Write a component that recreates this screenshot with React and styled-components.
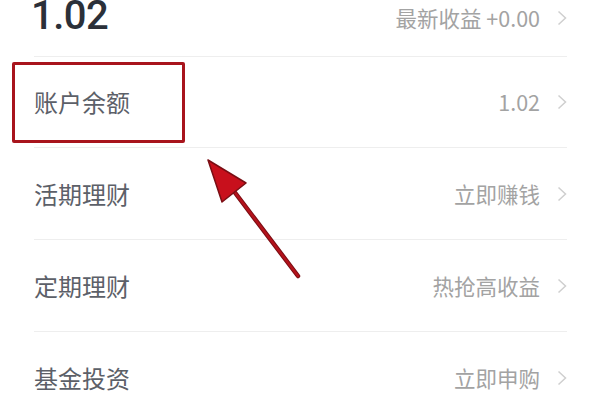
import React from "react";
import styled, { createGlobalStyle } from "styled-components";

const Global = createGlobalStyle`
  html, body { margin: 0; padding: 0; background: #fff; }
  body { font-family: "Noto Sans CJK SC", "Noto Sans", sans-serif; }
`;

const Page = styled.div`
  position: relative;
  width: 600px;
  height: 400px;
  overflow: hidden;
  background: #fff;
`;

const List = styled.div`
  display: flex;
  flex-direction: column;
  padding: 0 33px 0 34px;
`;

const Header = styled.div`
  height: 57px;
  display: flex;
  align-items: flex-start;
  justify-content: space-between;
  border-bottom: 1px solid #eeeeee;
  box-sizing: border-box;
`;

const Amount = styled.div`
  font-family: Roboto, "Liberation Sans", sans-serif;
  font-size: 40px;
  font-weight: 500;
  color: #2b3039;
  line-height: 1;
  margin-top: -4px;
  margin-left: -3px;
  letter-spacing: -0.5px;
`;

const Row = styled.div`
  height: ${(p) => p.h || 92}px;
  display: flex;
  align-items: center;
  justify-content: space-between;
  border-bottom: ${(p) => (p.last ? "none" : "1px solid #eeeeee")};
  box-sizing: border-box;
`;

const Label = styled.div`
  font-size: 24px;
  color: #5c6068;
  line-height: 1;
`;

const Side = styled.div`
  display: flex;
  align-items: center;
  gap: 17px;
  margin-top: ${(p) => p.top || 0}px;
`;

const Value = styled.div`
  font-size: 21.5px;
  color: #a3a3a3;
  line-height: 1;
  font-family: "Noto Sans CJK SC", "Noto Sans", sans-serif;
`;

const Highlight = styled.div`
  position: absolute;
  left: 12px;
  top: 62px;
  width: 173px;
  height: 81px;
  box-sizing: border-box;
  border: 3.5px solid #a8141c;
  border-radius: 2px;
`;

const ArrowSvg = styled.svg`
  position: absolute;
  left: 0;
  top: 0;
  pointer-events: none;
`;

const Chevron = () => (
  <svg width="10" height="16" viewBox="0 0 10 16">
    <path d="M1.5 1.5 L8.5 8 L1.5 14.5" fill="none" stroke="#cfcfcf" strokeWidth="1.5" />
  </svg>
);

const rows = [
  { label: "账户余额", value: "1.02" },
  { label: "活期理财", value: "立即赚钱" },
  { label: "定期理财", value: "热抢高收益" },
  { label: "基金投资", value: "立即申购", last: true },
];

export default function App() {
  return (
    <Page>
      <Global />
      <List>
        <Header>
          <Amount>1.02</Amount>
          <Side top={7}>
            <Value>最新收益 +0.00</Value>
            <Chevron />
          </Side>
        </Header>
        <Row h={91}>
          <Label>{rows[0].label}</Label>
          <Side>
            <Value>{rows[0].value}</Value>
            <Chevron />
          </Side>
        </Row>
        {rows.slice(1).map((r) => (
          <Row key={r.label} last={r.last}>
            <Label>{r.label}</Label>
            <Side>
              <Value>{r.value}</Value>
              <Chevron />
            </Side>
          </Row>
        ))}
      </List>
      <Highlight />
      <ArrowSvg width="600" height="400" viewBox="0 0 600 400">
        <line x1="298" y1="276" x2="230" y2="186" stroke="#7a0e14" strokeWidth="4.5" strokeLinecap="round" />
        <line x1="298" y1="276" x2="230" y2="186" stroke="#b3121b" strokeWidth="2.5" strokeLinecap="round" />
        <polygon points="208,160 246,183 222,202" fill="#c8101c" stroke="#7a0e14" strokeWidth="1.5" strokeLinejoin="round" />
      </ArrowSvg>
    </Page>
  );
}
